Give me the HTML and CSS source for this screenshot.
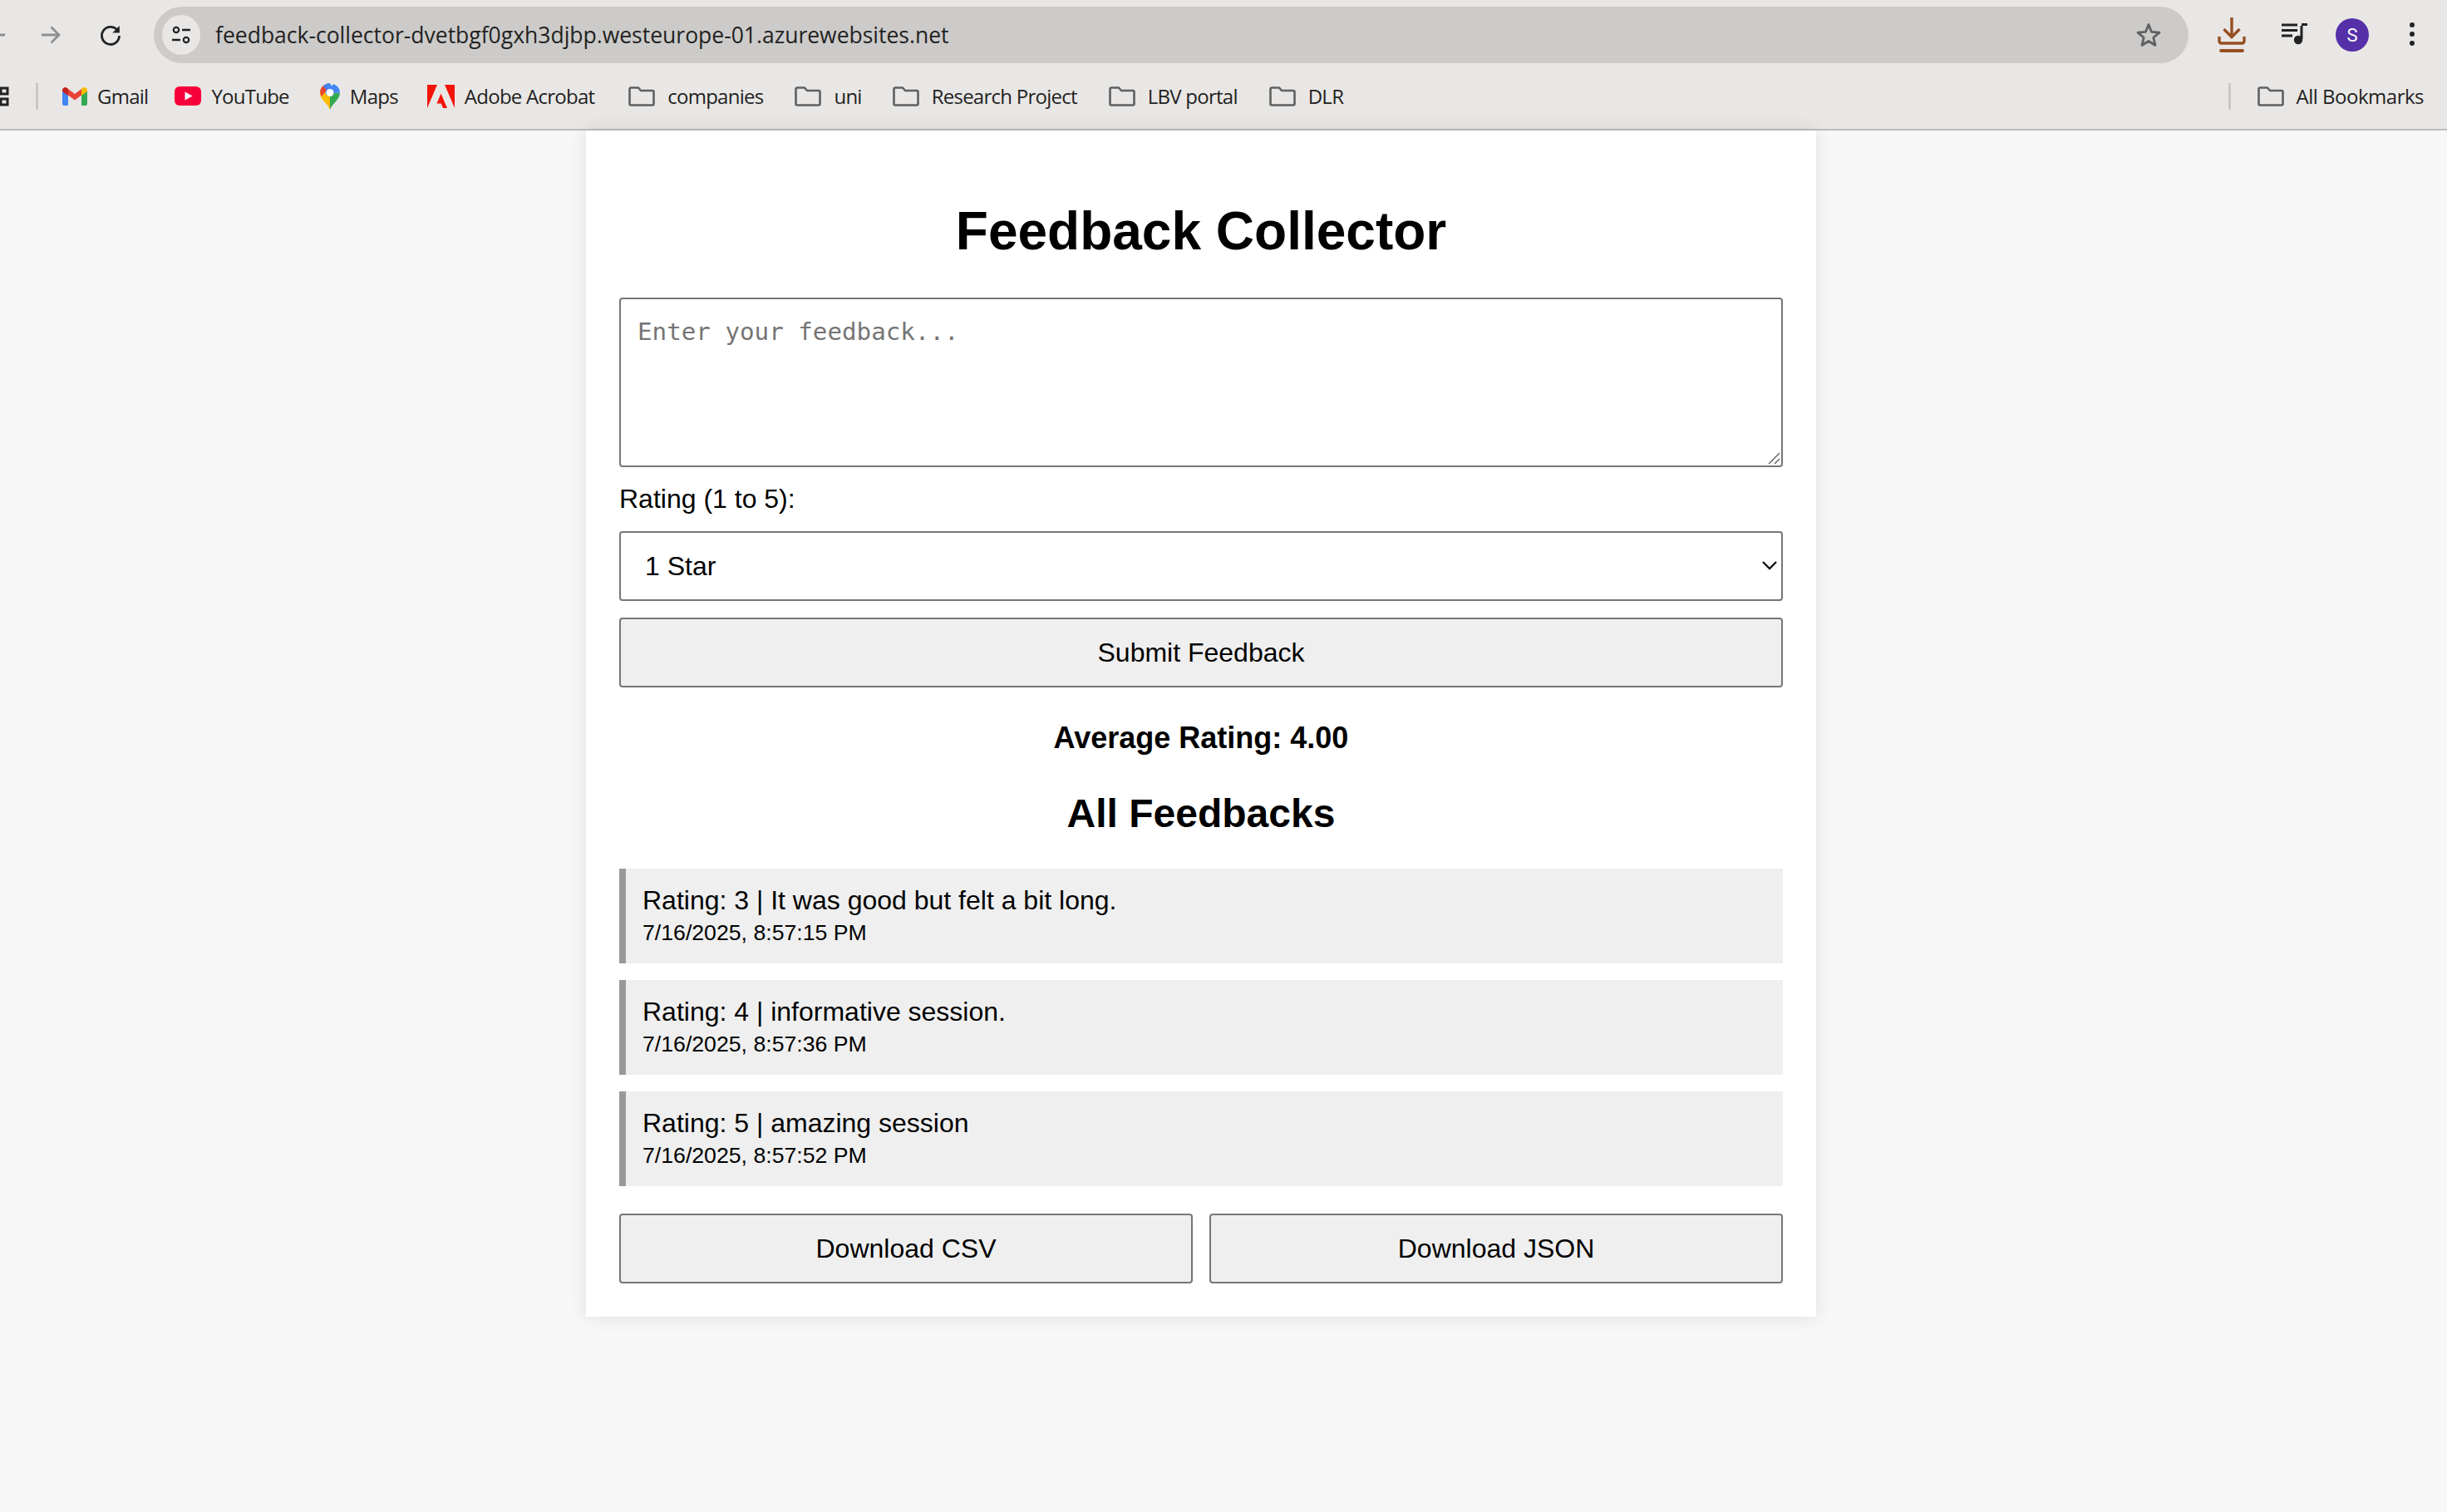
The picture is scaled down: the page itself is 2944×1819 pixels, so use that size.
FILE: index.html
```html
<!DOCTYPE html>
<html lang="en">

<head>
    <meta charset="UTF-8">
    <meta name="viewport" content="width=device-width, initial-scale=1.0">
    <title>Feedback Collector</title>
    <link rel="stylesheet" href="styles.css">
</head>

<body>
    <div class="browser">
        <div class="toolbar">
            <svg class="icon-back" width="12" height="30" viewBox="0 0 12 30"><path d="M-6 15H6" fill="none" stroke="#8c8c8c" stroke-width="3"/></svg>
            <svg class="icon-forward" width="28" height="28" viewBox="0 0 28 28"><path d="M3 14H24M14.500 4.500L24 14L14.500 23.500" fill="none" stroke="#8f8f8f" stroke-width="2.800"/></svg>
            <svg class="icon-reload" width="28" height="28" viewBox="0 0 28 28"><path d="M23 9.500A10.500 10.500 0 1 0 24.500 15" fill="none" stroke="#222" stroke-width="2.800"/><path d="M24.800 3V11.500H16.300Z" fill="#222"/></svg>
            <div class="omnibox">
                <span class="tune">
                    <svg width="24" height="24" viewBox="0 0 24 24"><circle cx="6" cy="6" r="3.200" fill="none" stroke="#222" stroke-width="2.200"/><path d="M13 6H23M1 18H11" stroke="#222" stroke-width="2.400"/><circle cx="18" cy="18" r="3.200" fill="none" stroke="#222" stroke-width="2.200"/></svg>
                </span>
                <span class="url">feedback-collector-dvetbgf0gxh3djbp.westeurope-01.azurewebsites.net</span>
                <svg class="icon-star" width="32" height="32" viewBox="0 0 32 32"><path d="M16 3.500L19.600 12.400L29 13.100L21.800 19.200L24 28.500L16 23.500L8 28.500L10.200 19.200L3 13.100L12.400 12.400Z" fill="none" stroke="#5f6060" stroke-width="2.800" stroke-linejoin="round"/></svg>
            </div>
            <div class="toolbar-actions">
                <svg class="icon-download" width="34" height="44" viewBox="0 0 34 44"><path d="M17 1V24M7.500 15L17 24.500L26.500 15" fill="none" stroke="#964f23" stroke-width="3.400"/><path d="M2 24V29.500A2.500 2.500 0 0 0 4.500 32H29.500A2.500 2.500 0 0 0 32 29.500V24" fill="none" stroke="#964f23" stroke-width="3.400"/><path d="M4 41H30" stroke="#964f23" stroke-width="3.800" stroke-linecap="round"/></svg>
                <svg class="icon-media" width="32" height="26" viewBox="0 0 32 26"><path d="M0 2H19M0 8.500H19M0 15H13" stroke="#222" stroke-width="2.800"/><path d="M24 3V19" stroke="#222" stroke-width="3"/><path d="M24 1.500H31" stroke="#222" stroke-width="3"/><circle cx="20" cy="20" r="5.200" fill="#222"/></svg>
                <span class="avatar">S</span>
                <svg class="icon-menu" width="8" height="32" viewBox="0 0 8 32"><circle cx="4" cy="4" r="3" fill="#222"/><circle cx="4" cy="15" r="3" fill="#222"/><circle cx="4" cy="26" r="3" fill="#222"/></svg>
            </div>
        </div>
        <div class="bookmarks">
            <svg class="icon-apps" width="11" height="26" viewBox="0 0 11 26"><path d="M1 3H9V10H1ZM1 16H9V23H1Z" fill="none" stroke="#222" stroke-width="3"/></svg>
            <span class="divider first"></span>
            <a class="bm bm-gmail">
                <svg width="30" height="24" viewBox="0 0 30 24"><path d="M0 4V21A2 2 0 0 0 2 23H7V10Z" fill="#4285f4"/><path d="M30 4V21A2 2 0 0 1 28 23H23V10Z" fill="#34a853"/><path d="M7 10.500L15 16.500L23 10.500V3L15 9L7 3Z" fill="#ea4335"/><path d="M0 4.500A3.500 3.500 0 0 1 6 2L7 3V11L0 6Z" fill="#c5221f"/><path d="M30 4.500A3.500 3.500 0 0 0 24 2L23 3V11L30 6Z" fill="#fbbc04"/></svg>
                Gmail
            </a>
            <a class="bm bm-youtube">
                <svg width="32" height="23" viewBox="0 0 32 23"><rect width="32" height="23" rx="6" fill="#f8003a"/><path d="M12.500 6.500L21.500 11.500L12.500 16.500Z" fill="#fff"/></svg>
                YouTube
            </a>
            <a class="bm bm-maps">
                <svg width="24" height="32" viewBox="0 0 24 32"><path d="M12 32C9 24 0 20 0 11.500A12 12 0 0 1 12 0Z" fill="#fbbc04"/><path d="M12 32C15 24 24 20 24 11.500L12 12Z" fill="#34a853"/><path d="M3.500 3.500A12 12 0 0 1 12 0L16 7.500L8 15Z" fill="#4285f4"/><path d="M3.500 3.500L8 8L2 16C0 13 -1 8 3.500 3.500Z" fill="#ea4335"/><path d="M16 1A12 12 0 0 1 24 11.500L16 12L12 7Z" fill="#4285f4"/><circle cx="12" cy="11.500" r="4.500" fill="#fff"/></svg>
                Maps
            </a>
            <a class="bm bm-adobe">
                <svg width="33" height="28" viewBox="0 0 33 28"><path d="M0 0H12L0 28ZM21 0H33V28ZM16.500 10.500L24 28H19L16.800 22.500H11.500Z" fill="#f5140a"/></svg>
                Adobe Acrobat
            </a>
            <a class="bm bm-companies">
                <svg class="folder" width="32" height="24" viewBox="0 0 32 24"><path d="M1.500 3A1.500 1.500 0 0 1 3 1.500H12L15 5H29A1.500 1.500 0 0 1 30.500 6.500V21A1.500 1.500 0 0 1 29 22.500H3A1.500 1.500 0 0 1 1.500 21Z" fill="none" stroke="#5f6060" stroke-width="2.600" stroke-linejoin="round"/></svg>
                companies
            </a>
            <a class="bm bm-uni">
                <svg class="folder" width="32" height="24" viewBox="0 0 32 24"><path d="M1.500 3A1.500 1.500 0 0 1 3 1.500H12L15 5H29A1.500 1.500 0 0 1 30.500 6.500V21A1.500 1.500 0 0 1 29 22.500H3A1.500 1.500 0 0 1 1.500 21Z" fill="none" stroke="#5f6060" stroke-width="2.600" stroke-linejoin="round"/></svg>
                uni
            </a>
            <a class="bm bm-research">
                <svg class="folder" width="32" height="24" viewBox="0 0 32 24"><path d="M1.500 3A1.500 1.500 0 0 1 3 1.500H12L15 5H29A1.500 1.500 0 0 1 30.500 6.500V21A1.500 1.500 0 0 1 29 22.500H3A1.500 1.500 0 0 1 1.500 21Z" fill="none" stroke="#5f6060" stroke-width="2.600" stroke-linejoin="round"/></svg>
                Research Project
            </a>
            <a class="bm bm-lbv">
                <svg class="folder" width="32" height="24" viewBox="0 0 32 24"><path d="M1.500 3A1.500 1.500 0 0 1 3 1.500H12L15 5H29A1.500 1.500 0 0 1 30.500 6.500V21A1.500 1.500 0 0 1 29 22.500H3A1.500 1.500 0 0 1 1.500 21Z" fill="none" stroke="#5f6060" stroke-width="2.600" stroke-linejoin="round"/></svg>
                LBV portal
            </a>
            <a class="bm bm-dlr">
                <svg class="folder" width="32" height="24" viewBox="0 0 32 24"><path d="M1.500 3A1.500 1.500 0 0 1 3 1.500H12L15 5H29A1.500 1.500 0 0 1 30.500 6.500V21A1.500 1.500 0 0 1 29 22.500H3A1.500 1.500 0 0 1 1.500 21Z" fill="none" stroke="#5f6060" stroke-width="2.600" stroke-linejoin="round"/></svg>
                DLR
            </a>
            <span class="divider last"></span>
            <a class="bm bm-all">
                <svg class="folder" width="32" height="24" viewBox="0 0 32 24"><path d="M1.500 3A1.500 1.500 0 0 1 3 1.500H12L15 5H29A1.500 1.500 0 0 1 30.500 6.500V21A1.500 1.500 0 0 1 29 22.500H3A1.500 1.500 0 0 1 1.500 21Z" fill="none" stroke="#5f6060" stroke-width="2.600" stroke-linejoin="round"/></svg>
                All Bookmarks
            </a>
        </div>
    </div>

    <div class="page">
        <div class="container">
            <h1>Feedback Collector</h1>
            <div class="textarea-wrap">
                <textarea id="feedback" placeholder="Enter your feedback..."></textarea>
                <svg class="grip" width="16" height="16" viewBox="0 0 16 16"><path d="M2 15L15 2M9 15L15 9" stroke="#666" stroke-width="1.500"/></svg>
            </div>
            <label for="rating">Rating (1 to 5):</label>
            <div class="select-wrap">
                <select id="rating">
                    <option>1 Star</option>
                    <option>2 Stars</option>
                    <option>3 Stars</option>
                    <option>4 Stars</option>
                    <option>5 Stars</option>
                </select>
                <svg class="arrow" width="18" height="12" viewBox="0 0 18 12"><path d="M1 2L9 10L17 2" fill="none" stroke="#111" stroke-width="2.400"/></svg>
            </div>
            <button class="btn">Submit Feedback</button>
            <h3>Average Rating: 4.00</h3>
            <h2>All Feedbacks</h2>
            <div class="feedback">Rating: 3 | It was good but felt a bit long.<br><small>7/16/2025, 8:57:15 PM</small></div>
            <div class="feedback">Rating: 4 | informative session.<br><small>7/16/2025, 8:57:36 PM</small></div>
            <div class="feedback">Rating: 5 | amazing session<br><small>7/16/2025, 8:57:52 PM</small></div>
            <div class="downloads">
                <button class="btn">Download CSV</button>
                <button class="btn">Download JSON</button>
            </div>
        </div>
    </div>
</body>

</html>
```

FILE: styles.css
```css
* {
    box-sizing: border-box;
}

html,
body {
    margin: 0;
    padding: 0;
    height: 100%;
}

body {
    display: flex;
    flex-direction: column;
    min-height: 1819px;
    background-color: #f7f7f7;
    font-family: "Liberation Sans", Arial, sans-serif;
    font-size: 32px;
    color: #000;
    overflow: hidden;
}

/* browser chrome */
.browser {
    height: 157px;
    background-color: #e9e7e5;
    border-bottom: 2px solid #bdbcba;
    font-family: "Open Sans", "Noto Sans", sans-serif;
    color: #222;
}

.toolbar {
    display: flex;
    align-items: center;
    height: 84px;
}

.icon-back {
    flex: none;
    width: 12px;
}

.icon-forward {
    margin-left: 35px;
}

.icon-reload {
    margin-left: 44px;
}

.omnibox {
    display: flex;
    align-items: center;
    width: 2448px;
    height: 68px;
    margin-left: 38px;
    padding: 0 32px 0 10px;
    background-color: #cccbc9;
    border-radius: 34px;
}

.tune {
    display: flex;
    align-items: center;
    justify-content: center;
    width: 46px;
    height: 48px;
    background-color: #e9e7e5;
    border-radius: 50%;
}

.url {
    flex: 1;
    margin-left: 18px;
    font-size: 26.500px;
}

.toolbar-actions {
    display: flex;
    align-items: center;
    margin-left: 35px;
}

.icon-media {
    margin-left: 43px;
    margin-top: -2px;
}

.avatar {
    display: flex;
    align-items: center;
    justify-content: center;
    width: 40px;
    height: 40px;
    margin-left: 33px;
    background-color: #5530a8;
    border-radius: 50%;
    color: #fff;
    font-family: Roboto, sans-serif;
    font-size: 22px;
}

.icon-menu {
    margin-left: 48px;
}

.bookmarks {
    display: flex;
    align-items: center;
    height: 71px;
    padding-bottom: 8px;
    font-size: 24px;
    letter-spacing: -0.75px;
}

.bm {
    display: flex;
    align-items: center;
    gap: 12px;
    white-space: nowrap;
}

.folder {
    margin-right: 3px;
}

.divider {
    width: 3px;
    height: 32px;
    background-color: #c9c8c6;
}

.divider.first {
    margin-left: 32px;
}

.bm-gmail {
    margin-left: 29px;
}

.bm-youtube {
    margin-left: 32px;
}

.bm-maps {
    margin-left: 37px;
}

.bm-adobe {
    margin-left: 35px;
}

.bm-companies {
    margin-left: 41px;
}

.bm-uni {
    margin-left: 38px;
}

.bm-research {
    margin-left: 37px;
}

.bm-lbv {
    margin-left: 38px;
}

.bm-dlr {
    margin-left: 38px;
}

.divider.last {
    margin-left: auto;
}

.bm-all {
    margin-left: 32px;
    margin-right: 28px;
    letter-spacing: -0.5px;
}

/* page */
.page {
    flex: 1;
}

.container {
    width: 1480px;
    margin-left: 705px;
    padding: 40px;
    background-color: #fff;
    box-shadow: 0 0 20px rgba(0, 0, 0, 0.1);
}

h1 {
    margin: 44px 0 43px;
    font-size: 64px;
    text-align: center;
}

h2 {
    margin: 0 0 39px;
    font-size: 48px;
    text-align: center;
}

h3 {
    margin: 40px 0 42px;
    font-size: 36px;
    text-align: center;
}

.textarea-wrap,
.select-wrap {
    position: relative;
}

textarea {
    display: block;
    width: 100%;
    height: 204px;
    margin-bottom: 20px;
    padding: 22px 20px 20px;
    background: #fff;
    border: 2px solid #767676;
    border-radius: 4px;
    font-family: "DejaVu Sans Mono", monospace;
    font-size: 29.200px;
    resize: none;
}

textarea::placeholder {
    color: #757575;
}

.grip {
    position: absolute;
    right: 3px;
    bottom: 3px;
}

label {
    display: block;
    margin-bottom: 20px;
}

select {
    display: block;
    width: 100%;
    height: 84px;
    margin-bottom: 20px;
    padding: 0 29px;
    background: #fff;
    border: 2px solid #767676;
    border-radius: 4px;
    font-family: inherit;
    font-size: 32px;
    color: #000;
    appearance: none;
}

.arrow {
    position: absolute;
    right: 7px;
    top: 35px;
}

.btn {
    display: block;
    width: 100%;
    height: 84px;
    background-color: #efefef;
    border: 2px solid #767676;
    border-radius: 4px;
    font-family: inherit;
    font-size: 32px;
    color: #000;
}

.feedback {
    margin-bottom: 20px;
    padding: 20px;
    background-color: #efefef;
    border-left: 8px solid #999;
}

.downloads {
    display: flex;
    gap: 20px;
    margin-top: 33px;
}
```
